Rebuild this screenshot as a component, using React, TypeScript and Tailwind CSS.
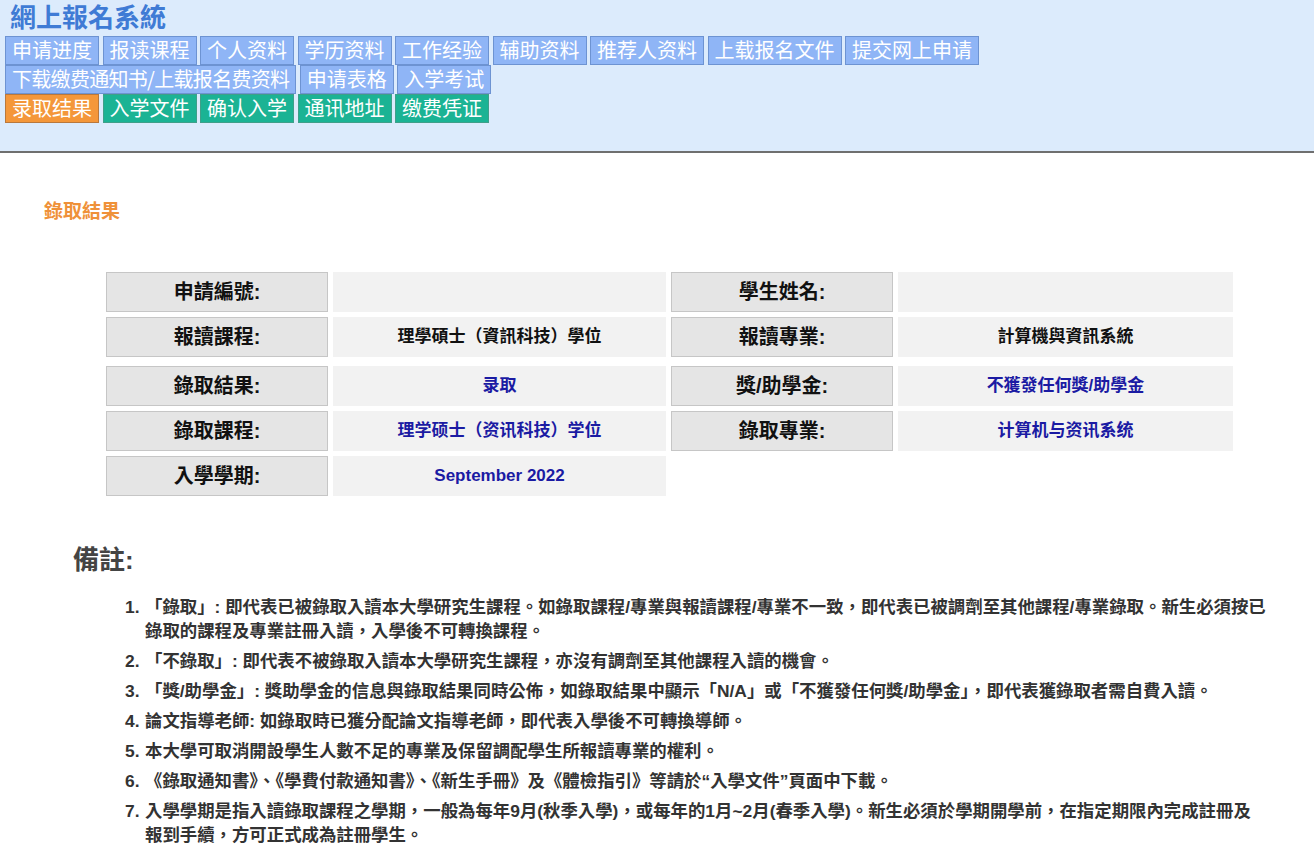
const tabRows: { label: string; tone: "blue" | "orange" | "teal"; tight?: boolean }[][] = [
  [
    { label: "申请进度", tone: "blue" },
    { label: "报读课程", tone: "blue" },
    { label: "个人资料", tone: "blue" },
    { label: "学历资料", tone: "blue" },
    { label: "工作经验", tone: "blue" },
    { label: "辅助资料", tone: "blue" },
    { label: "推荐人资料", tone: "blue" },
    { label: "上载报名文件", tone: "blue" },
    { label: "提交网上申请", tone: "blue" },
  ],
  [
    { label: "下载缴费通知书/上载报名费资料", tone: "blue", tight: true },
    { label: "申请表格", tone: "blue" },
    { label: "入学考试", tone: "blue" },
  ],
  [
    { label: "录取结果", tone: "orange" },
    { label: "入学文件", tone: "teal" },
    { label: "确认入学", tone: "teal" },
    { label: "通讯地址", tone: "teal" },
    { label: "缴费凭证", tone: "teal" },
  ],
];

const toneClass = {
  blue: "bg-[#8fb5f6] border-[#6d93d2]",
  orange: "bg-[#f4973a] border-[#b9783c]",
  teal: "bg-[#1bb394] border-[#3f9f89]",
};

const Label = ({ children }: { children: React.ReactNode }) => (
  <div className="h-[40px] flex items-center justify-center bg-[#e5e5e5] border border-[#c6c6c6] text-[20px] font-bold text-[#111]">
    {children}
  </div>
);

const Value = ({ children, blue }: { children?: React.ReactNode; blue?: boolean }) => (
  <div
    className={
      "h-[40px] flex items-center justify-center bg-[#f2f2f2] text-[17px] font-bold " +
      (blue ? "text-[#1b1ba3]" : "text-[#111]")
    }
  >
    {children}
  </div>
);

const notes: React.ReactNode[] = [
  <>
    「錄取」: 即代表已被錄取入讀本大學研究生課程。如錄取課程/專業與報讀課程/專業不一致，即代表已被調劑至其他課程/專業錄取。新生必須按已
    <br />
    錄取的課程及專業註冊入讀，入學後不可轉換課程。
  </>,
  <>「不錄取」: 即代表不被錄取入讀本大學研究生課程，亦沒有調劑至其他課程入讀的機會。</>,
  <>「獎/助學金」: 獎助學金的信息與錄取結果同時公佈，如錄取結果中顯示「N/A」或「不獲發任何獎/助學金」，即代表獲錄取者需自費入讀。</>,
  <>論文指導老師: 如錄取時已獲分配論文指導老師，即代表入學後不可轉換導師。</>,
  <>本大學可取消開設學生人數不足的專業及保留調配學生所報讀專業的權利。</>,
  <>《錄取通知書》、《學費付款通知書》、《新生手冊》及《體檢指引》等請於“入學文件”頁面中下載。</>,
  <>
    入學學期是指入讀錄取課程之學期，一般為每年9月(秋季入學)，或每年的1月~2月(春季入學)。新生必須於學期開學前，在指定期限內完成註冊及
    <br />
    報到手續，方可正式成為註冊學生。
  </>,
];

export default function App() {
  return (
    <div className="min-h-screen bg-white font-['Liberation_Sans','Noto_Sans_CJK_TC',sans-serif]">
      <header className="h-[153px] bg-[#dcebfc] border-b-2 border-[#6f6f6f] pl-[5px] pt-[3px]">
        <h1 className="ml-[5px] h-[33px] text-[26px] leading-[30px] font-bold text-[#3f7bd5]">網上報名系統</h1>
        <div className="flex flex-col font-['Noto_Sans_CJK_SC',sans-serif]">
          {tabRows.map((row, i) => (
            <div key={i} className="flex gap-[3.5px]">
              {row.map((t) => (
                <div
                  key={t.label}
                  className={
                    "h-[29px] px-[6px] border text-[20px] leading-[26px] text-white whitespace-nowrap " +
                    (t.tight ? "tracking-[-0.7px] " : "") +
                    toneClass[t.tone]
                  }
                >
                  {t.label}
                </div>
              ))}
            </div>
          ))}
        </div>
      </header>

      <main className="pt-[47px]">
        <h2 className="ml-[44px] text-[19px] leading-[24px] font-bold text-[#ef9139]">錄取結果</h2>

        <div className="ml-[106px] mt-[48px] w-[1127px]">
          <div className="grid grid-cols-[222px_333px_222px_335px] gap-[5px]">
            <Label>申請編號:</Label>
            <Value />
            <Label>學生姓名:</Label>
            <Value />
            <Label>報讀課程:</Label>
            <Value>理學碩士（資訊科技）學位</Value>
            <Label>報讀專業:</Label>
            <Value>計算機與資訊系統</Value>
          </div>
          <div className="mt-[9px] grid grid-cols-[222px_333px_222px_335px] gap-[5px]">
            <Label>錄取結果:</Label>
            <Value blue>录取</Value>
            <Label>獎/助學金:</Label>
            <Value blue>不獲發任何獎/助學金</Value>
            <Label>錄取課程:</Label>
            <Value blue>理学硕士（资讯科技）学位</Value>
            <Label>錄取專業:</Label>
            <Value blue>计算机与资讯系统</Value>
            <Label>入學學期:</Label>
            <Value blue>September 2022</Value>
          </div>
        </div>

        <h3 className="ml-[73px] mt-[48px] text-[26px] leading-[32px] font-bold text-[#444]">備註:</h3>

        <ol className="mt-[19px] ml-[125px] pr-[20px] text-[17.4px] leading-[24px] font-bold text-[#333]">
          {notes.map((n, i) => (
            <li key={i} className="flex mb-[6px]">
              <span className="w-[20px] shrink-0">{i + 1}.</span>
              <span className="whitespace-nowrap">{n}</span>
            </li>
          ))}
        </ol>
      </main>
    </div>
  );
}
